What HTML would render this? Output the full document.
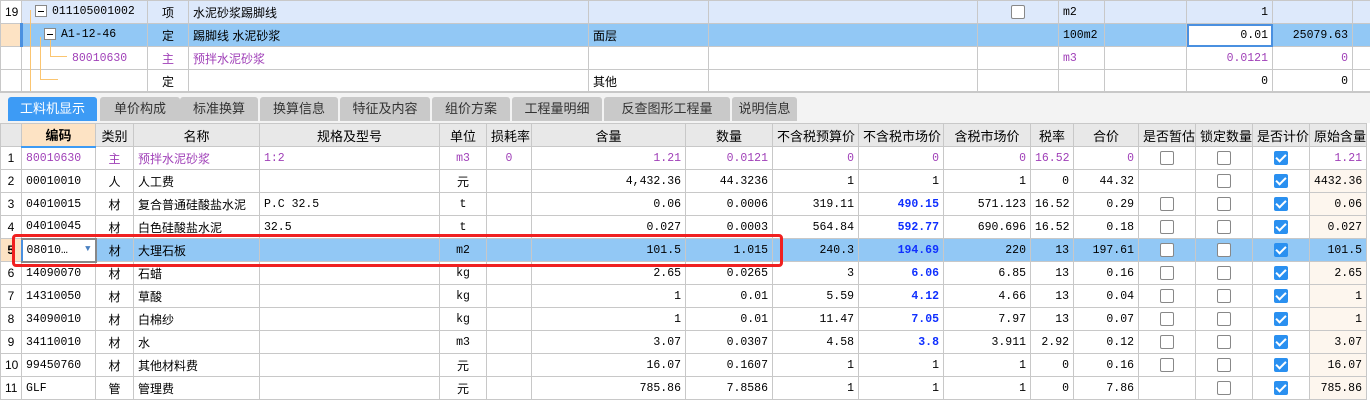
<!DOCTYPE html>
<html><head><meta charset="utf-8"><style>
*{margin:0;padding:0;box-sizing:border-box}
body{width:1370px;height:403px;overflow:hidden;background:#fff;font-family:"Liberation Sans","Noto Sans CJK SC",sans-serif;font-size:12px;color:#000;position:relative}
table{border-collapse:collapse;table-layout:fixed;position:absolute;left:0}
td{border:1px solid #c8c8c8;height:23px;padding:0 4px;white-space:nowrap;overflow:hidden;font-size:12px}
.m{font-family:"Liberation Mono","Noto Sans CJK SC",monospace;font-size:11.5px}
.r{text-align:right}.c{text-align:center}
.p{color:#a040b8}.b{color:#1030ff;font-weight:bold}
.cb{display:inline-block;width:14px;height:14px;border:1px solid #888;border-radius:2px;background:#fff;vertical-align:middle}
.ck{display:inline-block;width:14px;height:14px;border-radius:2px;background:#2a90f0;vertical-align:middle;position:relative}
.ck:after{content:"";position:absolute;left:4px;top:1px;width:4px;height:8px;border:solid #fff;border-width:0 2px 2px 0;transform:rotate(45deg)}
#top tr.h td{background:#dde9fb}
#top tr.s td{background:#92c8f5}
#bot tr.hd td{background:#e8e8e8;text-align:center;font-size:13px}
#bot tr.s td{background:#92c8f5}
.tab{position:absolute;top:97px;height:24px;background:#c9c9c9;font-size:13px;color:#333;text-align:center;line-height:24px;border-radius:3px 3px 0 0}
.mi{display:inline-block;width:12px;height:12px;border:1px solid #888;background:#fff;vertical-align:middle;position:relative;margin-right:5px}
.mi:after{content:"";position:absolute;left:2px;top:5px;width:6px;height:1px;background:#000}
</style></head><body>
<table id="top" style="top:0;width:1370px">
<colgroup><col style="width:21px"><col style="width:126px"><col style="width:41px"><col style="width:400px"><col style="width:120px"><col style="width:269px"><col style="width:81px"><col style="width:46px"><col style="width:82px"><col style="width:86px"><col style="width:80px"><col style="width:18px"></colgroup>
<tr class="h"><td style="background:#fff;text-align:center">19</td><td class="m" style="padding-left:13px"><span class="mi"></span>011105001002</td><td class="c">项</td><td>水泥砂浆踢脚线</td><td></td><td></td><td class="c"><span class="cb"></span></td><td class="m">m2</td><td></td><td class="r m">1</td><td></td><td></td></tr>
<tr class="s"><td style="background:#fde3c4"></td><td class="m" style="padding-left:21px;border-left:3px solid #4a90e0"><span class="mi"></span>A1-12-46</td><td class="c">定</td><td>踢脚线 水泥砂浆</td><td>面层</td><td></td><td></td><td class="m">100m2</td><td></td><td class="r m" style="background:#fff;outline:2px solid #4a90e0;outline-offset:-2px">0.01</td><td class="r m">25079.63</td><td></td></tr>
<tr><td></td><td class="m p" style="padding-left:50px">80010630</td><td class="c p">主</td><td class="p">预拌水泥砂浆</td><td></td><td></td><td></td><td class="m p">m3</td><td></td><td class="r m p">0.0121</td><td class="r m p">0</td><td></td></tr>
<tr><td></td><td></td><td class="c">定</td><td></td><td>其他</td><td></td><td></td><td></td><td></td><td class="r m">0</td><td class="r m">0</td><td></td></tr>
</table>
<div style="position:absolute;left:30px;top:10px;width:1px;height:81px;background:#fbc570"></div>
<div style="position:absolute;left:40px;top:37px;width:1px;height:42px;background:#fbc570"></div>
<div style="position:absolute;left:40px;top:79px;width:18px;height:1px;background:#fbc570"></div>
<div style="position:absolute;left:50px;top:40px;width:1px;height:16px;background:#fbc570"></div>
<div style="position:absolute;left:50px;top:56px;width:17px;height:1px;background:#fbc570"></div>
<div style="position:absolute;left:0;top:91px;width:1370px;height:32px;background:#f3f3f3;border-top:2px solid #c8c8c8"></div>
<div class="tab" style="left:8px;width:89px;background:#3d9bf5;color:#fff">工料机显示</div>
<div class="tab" style="left:100px;width:80px">单价构成</div>
<div class="tab" style="left:180px;width:78px">标准换算</div>
<div class="tab" style="left:260px;width:78px">换算信息</div>
<div class="tab" style="left:340px;width:90px">特征及内容</div>
<div class="tab" style="left:432px;width:78px">组价方案</div>
<div class="tab" style="left:512px;width:90px">工程量明细</div>
<div class="tab" style="left:604px;width:126px">反查图形工程量</div>
<div class="tab" style="left:732px;width:65px">说明信息</div>
<table id="bot" style="top:123px;width:1366px">
<colgroup><col style="width:21px"><col style="width:74px"><col style="width:38px"><col style="width:126px"><col style="width:180px"><col style="width:47px"><col style="width:45px"><col style="width:154px"><col style="width:87px"><col style="width:86px"><col style="width:85px"><col style="width:87px"><col style="width:43px"><col style="width:65px"><col style="width:57px"><col style="width:57px"><col style="width:57px"><col style="width:57px"></colgroup>
<tr class="hd"><td></td><td style="background:#fde3c4;font-weight:bold;border-bottom:2px solid #3d9bf5">编码</td><td>类别</td><td>名称</td><td>规格及型号</td><td>单位</td><td>损耗率</td><td>含量</td><td>数量</td><td>不含税预算价</td><td>不含税市场价</td><td>含税市场价</td><td>税率</td><td>合价</td><td>是否暂估</td><td>锁定数量</td><td>是否计价</td><td>原始含量</td></tr>
<tr class="p"><td class="c" style="color:#000">1</td><td class="m">80010630</td><td class="c">主</td><td>预拌水泥砂浆</td><td class="m">1:2</td><td class="c m">m3</td><td class="c m">0</td><td class="r m">1.21</td><td class="r m">0.0121</td><td class="r m">0</td><td class="r m">0</td><td class="r m">0</td><td class="r m">16.52</td><td class="r m">0</td><td class="c"><span class="cb"></span></td><td class="c"><span class="cb"></span></td><td class="c"><span class="ck"></span></td><td class="r m">1.21</td></tr>
<tr><td class="c">2</td><td class="m">00010010</td><td class="c">人</td><td>人工费</td><td></td><td class="c">元</td><td></td><td class="r m">4,432.36</td><td class="r m">44.3236</td><td class="r m">1</td><td class="r m">1</td><td class="r m">1</td><td class="r m">0</td><td class="r m">44.32</td><td></td><td class="c"><span class="cb"></span></td><td class="c"><span class="ck"></span></td><td class="r m" style="background:#fdf6ee">4432.36</td></tr>
<tr><td class="c">3</td><td class="m">04010015</td><td class="c">材</td><td>复合普通硅酸盐水泥</td><td class="m">P.C 32.5</td><td class="c m">t</td><td></td><td class="r m">0.06</td><td class="r m">0.0006</td><td class="r m">319.11</td><td class="r m b">490.15</td><td class="r m">571.123</td><td class="r m">16.52</td><td class="r m">0.29</td><td class="c"><span class="cb"></span></td><td class="c"><span class="cb"></span></td><td class="c"><span class="ck"></span></td><td class="r m" style="background:#fdf6ee">0.06</td></tr>
<tr><td class="c">4</td><td class="m">04010045</td><td class="c">材</td><td>白色硅酸盐水泥</td><td class="m">32.5</td><td class="c m">t</td><td></td><td class="r m">0.027</td><td class="r m">0.0003</td><td class="r m">564.84</td><td class="r m b">592.77</td><td class="r m">690.696</td><td class="r m">16.52</td><td class="r m">0.18</td><td class="c"><span class="cb"></span></td><td class="c"><span class="cb"></span></td><td class="c"><span class="ck"></span></td><td class="r m" style="background:#fdf6ee">0.027</td></tr>
<tr class="s"><td class="c" style="background:#fde3c4;font-weight:bold">5</td><td class="m" style="background:#fff;border:2px solid #888;border-left:2px solid #4a90e0">08010…<span style="float:right;color:#4a80c0;font-size:9px">▼</span></td><td class="c">材</td><td>大理石板</td><td></td><td class="c m">m2</td><td></td><td class="r m">101.5</td><td class="r m">1.015</td><td class="r m">240.3</td><td class="r m b">194.69</td><td class="r m">220</td><td class="r m">13</td><td class="r m">197.61</td><td class="c"><span class="cb"></span></td><td class="c"><span class="cb"></span></td><td class="c"><span class="ck"></span></td><td class="r m">101.5</td></tr>
<tr><td class="c">6</td><td class="m">14090070</td><td class="c">材</td><td>石蜡</td><td></td><td class="c m">kg</td><td></td><td class="r m">2.65</td><td class="r m">0.0265</td><td class="r m">3</td><td class="r m b">6.06</td><td class="r m">6.85</td><td class="r m">13</td><td class="r m">0.16</td><td class="c"><span class="cb"></span></td><td class="c"><span class="cb"></span></td><td class="c"><span class="ck"></span></td><td class="r m" style="background:#fdf6ee">2.65</td></tr>
<tr><td class="c">7</td><td class="m">14310050</td><td class="c">材</td><td>草酸</td><td></td><td class="c m">kg</td><td></td><td class="r m">1</td><td class="r m">0.01</td><td class="r m">5.59</td><td class="r m b">4.12</td><td class="r m">4.66</td><td class="r m">13</td><td class="r m">0.04</td><td class="c"><span class="cb"></span></td><td class="c"><span class="cb"></span></td><td class="c"><span class="ck"></span></td><td class="r m" style="background:#fdf6ee">1</td></tr>
<tr><td class="c">8</td><td class="m">34090010</td><td class="c">材</td><td>白棉纱</td><td></td><td class="c m">kg</td><td></td><td class="r m">1</td><td class="r m">0.01</td><td class="r m">11.47</td><td class="r m b">7.05</td><td class="r m">7.97</td><td class="r m">13</td><td class="r m">0.07</td><td class="c"><span class="cb"></span></td><td class="c"><span class="cb"></span></td><td class="c"><span class="ck"></span></td><td class="r m" style="background:#fdf6ee">1</td></tr>
<tr><td class="c">9</td><td class="m">34110010</td><td class="c">材</td><td>水</td><td></td><td class="c m">m3</td><td></td><td class="r m">3.07</td><td class="r m">0.0307</td><td class="r m">4.58</td><td class="r m b">3.8</td><td class="r m">3.911</td><td class="r m">2.92</td><td class="r m">0.12</td><td class="c"><span class="cb"></span></td><td class="c"><span class="cb"></span></td><td class="c"><span class="ck"></span></td><td class="r m" style="background:#fdf6ee">3.07</td></tr>
<tr><td class="c">10</td><td class="m">99450760</td><td class="c">材</td><td>其他材料费</td><td></td><td class="c">元</td><td></td><td class="r m">16.07</td><td class="r m">0.1607</td><td class="r m">1</td><td class="r m">1</td><td class="r m">1</td><td class="r m">0</td><td class="r m">0.16</td><td class="c"><span class="cb"></span></td><td class="c"><span class="cb"></span></td><td class="c"><span class="ck"></span></td><td class="r m" style="background:#fdf6ee">16.07</td></tr>
<tr><td class="c">11</td><td class="m">GLF</td><td class="c">管</td><td>管理费</td><td></td><td class="c">元</td><td></td><td class="r m">785.86</td><td class="r m">7.8586</td><td class="r m">1</td><td class="r m">1</td><td class="r m">1</td><td class="r m">0</td><td class="r m">7.86</td><td></td><td class="c"><span class="cb"></span></td><td class="c"><span class="ck"></span></td><td class="r m" style="background:#fdf6ee">785.86</td></tr>
</table>
<div style="position:absolute;left:12px;top:234px;width:771px;height:33px;border:3px solid #f02020;border-radius:4px"></div>
</body></html>
